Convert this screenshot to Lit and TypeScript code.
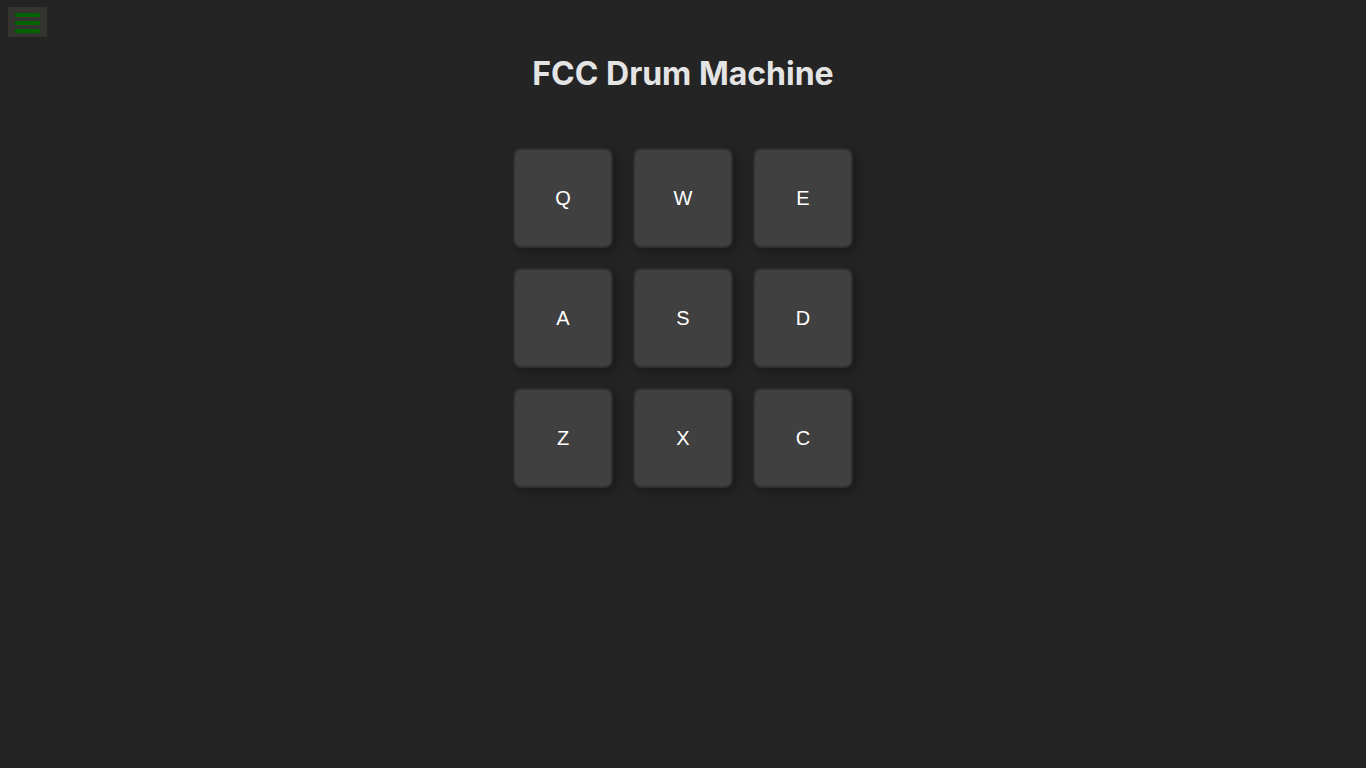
import { LitElement, html, css } from "lit";
import { customElement, state } from "lit/decorators.js";

const PADS = ["Q", "W", "E", "A", "S", "D", "Z", "X", "C"];

@customElement("drum-pad")
class DrumPad extends LitElement {
  static properties = { label: { type: String } };
  declare label: string;

  static styles = css`
    :host {
      display: block;
    }
    .pad {
      box-sizing: border-box;
      display: block;
      width: 100%;
      aspect-ratio: 1;
      margin: 0;
      padding: 0;
      border: 2px solid #303030;
      border-radius: 8px;
      background: #404040;
      color: #fff;
      font: 20px "Liberation Sans", Arial, sans-serif;
      box-shadow: 4px 4px 12px rgba(0, 0, 0, 0.3);
      cursor: pointer;
    }
    .pad:active {
      background: #505050;
    }
  `;

  render() {
    return html`<button class="pad" type="button">${this.label}</button>`;
  }
}

@customElement("app-root")
class AppRoot extends LitElement {
  @state() private menuOpen = false;

  static styles = css`
    :host {
      display: block;
      box-sizing: border-box;
      min-height: 100vh;
      background: #242424;
      color: #e4e4e4;
      font-family: Inter, "Liberation Sans", sans-serif;
      line-height: 24px;
      text-rendering: optimizeLegibility;
    }
    .bar {
      display: flex;
      padding: 7px 8px 0;
    }
    .menu {
      display: flex;
      flex-direction: column;
      gap: 4px;
      padding: 6px 7px 4px;
      border: 0;
      background: #333330;
      cursor: pointer;
    }
    .line {
      width: 25px;
      height: 4px;
      border-radius: 1px;
      background: #006400;
    }
    .machine {
      display: flex;
      flex-direction: column;
      align-items: center;
      padding: 13px 16px 32px;
    }
    .title {
      margin: 0 0 50px;
      font-size: 32px;
      font-weight: 700;
      line-height: 48px;
      text-align: center;
    }
    .pads {
      display: grid;
      grid-template-columns: repeat(3, 100px);
      gap: 20px;
    }
  `;

  render() {
    return html`
      <header class="bar">
        <button
          class="menu"
          type="button"
          aria-label="Menu"
          aria-expanded=${this.menuOpen ? "true" : "false"}
          @click=${() => (this.menuOpen = !this.menuOpen)}
        >
          <span class="line"></span>
          <span class="line"></span>
          <span class="line"></span>
        </button>
      </header>
      <main class="machine">
        <h1 class="title">FCC Drum Machine</h1>
        <div class="pads">
          ${PADS.map((key) => html`<drum-pad .label=${key}></drum-pad>`)}
        </div>
      </main>
    `;
  }
}
